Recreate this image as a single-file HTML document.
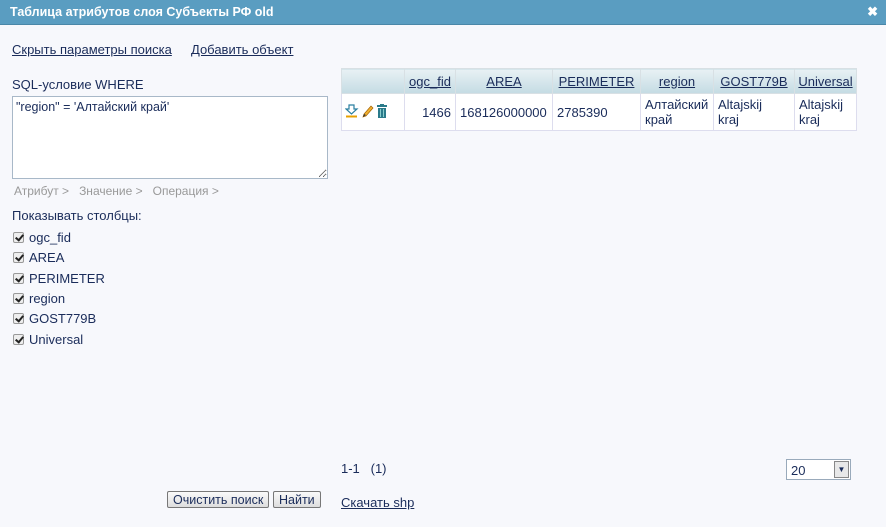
<!DOCTYPE html>
<html><head><meta charset="utf-8">
<style>
*{box-sizing:border-box}
body{margin:0;width:886px;height:527px;background:#f7f8fc;font-family:"Liberation Sans",sans-serif;font-size:13px;color:#1a2c5a;position:relative;overflow:hidden}
.title{position:absolute;left:0;top:0;width:886px;height:25px;background:#5a9dc1;border-bottom:1px solid #4a87a8;color:#fff;font-weight:bold;font-size:12.5px;line-height:24px;padding-left:10px}
.x{position:absolute;right:8px;top:0;color:#fff;font-size:13px;font-weight:bold}
a{color:#1a2c5a;text-decoration:underline}
.abs{position:absolute}
textarea{position:absolute;left:12px;top:96px;width:316px;height:83px;border:1px solid #a8b8c8;background:#fff;font-family:"Liberation Sans",sans-serif;font-size:12.5px;padding:3px;color:#1a2c5a}
.grey{color:#999}
.cb{position:absolute;left:13px;font-size:13px}
.cb i{display:inline-block;width:11px;height:11px;border:1px solid #999;background:#eee;vertical-align:-1px;margin-right:5px;position:relative;border-radius:2px}
.cb i:after{content:"";position:absolute;left:3px;top:0px;width:3px;height:6px;border:solid #222;border-width:0 2px 2px 0;transform:rotate(40deg)}
table{position:absolute;left:341px;top:68px;border-collapse:collapse;font-size:13px;table-layout:fixed;width:515px}
th{background:linear-gradient(#e8f1f4,#c4dbe3);font-weight:normal;height:25px;border:1px solid #d8e0e4;padding:0 3px;text-align:center;white-space:nowrap}
th a{color:#1a2c5a}
td{border:1px solid #dde;background:#fff;vertical-align:top;padding:3px 4px;height:37px;line-height:15px}
button{position:absolute;top:491px;height:17px;font-family:"Liberation Sans",sans-serif;font-size:12.5px;border:1px solid #777;border-radius:2px;background:linear-gradient(#fafafa,#ddd);padding:0 5px;color:#1a2c5a;line-height:14px}
</style></head><body>
<div class="title">Таблица атрибутов слоя Субъекты РФ old<span class="x">✖</span></div>
<a class="abs" style="left:12px;top:42px">Скрыть параметры поиска</a>
<a class="abs" style="left:191px;top:42px">Добавить объект</a>
<div class="abs" style="left:12px;top:77px">SQL-условие WHERE</div>
<textarea>"region" = 'Алтайский край'</textarea>
<div class="abs grey" style="left:14px;top:184px;font-size:12px">Атрибут &gt;&nbsp;&nbsp; Значение &gt;&nbsp;&nbsp; Операция &gt;</div>
<div class="abs" style="left:12px;top:208px">Показывать столбцы:</div>
<div class="cb" style="top:230px"><i></i>ogc_fid</div>
<div class="cb" style="top:250px"><i></i>AREA</div>
<div class="cb" style="top:271px"><i></i>PERIMETER</div>
<div class="cb" style="top:291px"><i></i>region</div>
<div class="cb" style="top:311px"><i></i>GOST779B</div>
<div class="cb" style="top:332px"><i></i>Universal</div>
<table>
<colgroup><col style="width:63px"><col style="width:51px"><col style="width:97px"><col style="width:88px"><col style="width:73px"><col style="width:81px"><col style="width:62px"></colgroup>
<tr><th></th><th><a>ogc_fid</a></th><th><a>AREA</a></th><th><a>PERIMETER</a></th><th><a>region</a></th><th><a>GOST779B</a></th><th><a>Universal</a></th></tr>
<tr><td style="vertical-align:middle;padding:0 3px">
<svg width="54" height="14" viewBox="0 0 54 14">
<path d="M4 1h5v4h3l-5.5 5L1 5h3z" fill="#fff" stroke="#2a7fa0" stroke-width="1.2"/><rect x="1" y="11.5" width="11" height="2" fill="#e8a000"/>
<path d="M18 13l1-3 7-8 2 2-7 8z" fill="#f0b030" stroke="#a06000" stroke-width=".7"/><path d="M18 13l1-3 2 1z" fill="#333"/>
<rect x="32" y="1" width="10" height="2" fill="#2a7a8a"/><rect x="35" y="0" width="4" height="2" fill="#2a7a8a"/><rect x="33" y="4" width="8" height="10" fill="#2a7a8a"/><path d="M35.5 5v8M38.5 5v8" stroke="#8cc" stroke-width="1"/>
</svg></td>
<td style="text-align:right;vertical-align:middle">1466</td><td style="vertical-align:middle">168126000000</td><td style="vertical-align:middle">2785390</td><td>Алтайский<br>край</td><td>Altajskij<br>kraj</td><td>Altajskij<br>kraj</td></tr>
</table>
<div class="abs" style="left:341px;top:461px">1-1 &nbsp; (1)</div>
<div class="abs" style="left:786px;top:459px;width:65px;height:21px;border:1px solid #9ab;background:#fff;padding:3px 4px">20<span style="position:absolute;right:1px;top:1px;width:15px;height:17px;border:1px solid #888;background:#e8e8e8;font-size:8px;text-align:center;line-height:16px">▼</span></div>
<button style="left:167px">Очистить поиск</button>
<button style="left:273px">Найти</button>
<a class="abs" style="left:341px;top:495px">Скачать shp</a>
</body></html>
